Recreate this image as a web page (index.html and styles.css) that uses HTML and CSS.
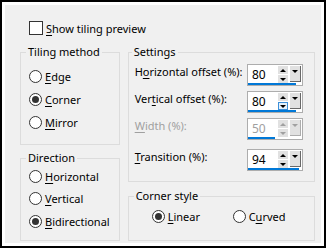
FILE: index.html
```html
<!DOCTYPE html>
<html lang="en">
<head>
  <meta charset="UTF-8">
  <title>Tiling</title>
  <link rel="stylesheet" href="styles.css">
</head>
<body>
  <div class="frame">
    <div class="dialog">
      <label class="check-row"><span class="checkbox"></span><span><u>S</u>how tiling preview</span></label>

      <div class="columns">
        <div class="col col-left">
          <fieldset class="group group-tiling">
            <legend>Tiling method</legend>
            <label class="radio"><span class="circle"></span><span><u>E</u>dge</span></label>
            <label class="radio"><span class="circle checked"></span><span><u>C</u>orner</span></label>
            <label class="radio"><span class="circle"></span><span><u>M</u>irror</span></label>
          </fieldset>

          <fieldset class="group group-direction">
            <legend>Direction</legend>
            <label class="radio"><span class="circle"></span><span><u>H</u>orizontal</span></label>
            <label class="radio"><span class="circle"></span><span><u>V</u>ertical</span></label>
            <label class="radio"><span class="circle checked"></span><span><u>B</u>idirectional</span></label>
          </fieldset>
        </div>

        <div class="col col-right">
          <fieldset class="group group-settings">
            <legend>Settings</legend>
            <div class="field">
              <span class="field-label">H<u>o</u>rizontal offset (%):</span>
              <div class="spin">
                <div class="spin-main">
                  <span class="spin-value">80</span>
                  <span class="spin-arrows"><span class="arrow up"></span><span class="arrow down"></span></span>
                  <span class="spin-drop"></span>
                </div>
                <div class="spin-track"><div class="spin-bar" style="width: 88%"></div></div>
              </div>
            </div>
            <div class="field">
              <span class="field-label">Ver<u>t</u>ical offset (%):</span>
              <div class="spin">
                <div class="spin-main">
                  <span class="spin-value">80</span>
                  <span class="spin-arrows"><span class="arrow up"></span><span class="arrow down hot"></span></span>
                  <span class="spin-drop"></span>
                </div>
                <div class="spin-track"><div class="spin-bar" style="width: 88%"></div></div>
              </div>
            </div>
            <div class="field field-wide disabled">
              <span class="field-label"><u>W</u>idth (%):</span>
              <div class="spin">
                <div class="spin-main">
                  <span class="spin-value">50</span>
                  <span class="spin-arrows"><span class="arrow up"></span><span class="arrow down"></span></span>
                  <span class="spin-drop"></span>
                </div>
                <div class="spin-track"><div class="spin-bar" style="width: 50%"></div></div>
              </div>
            </div>
            <div class="field">
              <span class="field-label"><u>T</u>ransition (%):</span>
              <div class="spin">
                <div class="spin-main">
                  <span class="spin-value">94</span>
                  <span class="spin-arrows"><span class="arrow up"></span><span class="arrow down"></span></span>
                  <span class="spin-drop"></span>
                </div>
                <div class="spin-track"><div class="spin-bar" style="width: 94%"></div></div>
              </div>
            </div>
          </fieldset>

          <fieldset class="group group-corner">
            <legend>Corner style</legend>
            <div class="radio-line">
              <label class="radio radio-linear"><span class="circle checked"></span><span><u>L</u>inear</span></label>
              <label class="radio"><span class="circle"></span><span>C<u>u</u>rved</span></label>
            </div>
          </fieldset>
        </div>
      </div>
    </div>
  </div>
</body>
</html>
```

FILE: styles.css
```css
* {
  box-sizing: border-box;
}

body {
  margin: 0;
  font-family: "Noto Sans", sans-serif;
  font-size: 11px;
  color: #000;
}

u {
  text-underline-offset: 2px;
}

.frame {
  width: 326px;
  height: 248px;
  border: 2px solid #000;
  background: #fff;
  padding: 3px;
}

.dialog {
  height: 100%;
  background: #f0f0f0;
  padding: 16px 6px 0 15px;
}

/* top checkbox */
.check-row {
  display: flex;
  align-items: center;
  gap: 3px;
  height: 14px;
  margin-left: 9px;
}

.checkbox {
  width: 14px;
  height: 14px;
  border: 1px solid #333;
  background: #fff;
}

.columns {
  display: flex;
  gap: 8px;
  margin-top: 10px;
}

.col {
  display: flex;
  flex-direction: column;
}

.col-left {
  width: 100px;
  gap: 6px;
}

.col-right {
  width: 188px;
  gap: 7px;
}

/* group boxes */
.group {
  margin: 0;
  padding: 0 8px;
  border: 1px solid #dcdcdc;
  min-width: 0;
}

legend {
  margin-left: -3px;
  padding: 0 2px;
  line-height: 14px;
}

.group-tiling {
  height: 100px;
  padding-top: 6px;
}

.group-direction {
  height: 90px;
}

.group-settings {
  height: 137px;
  padding: 5px 11px 0 6px;
}

.group-corner {
  height: 52px;
  padding-top: 2px;
}

/* radios */
.radio {
  display: flex;
  align-items: center;
  gap: 3px;
  height: 23px;
  white-space: nowrap;
}

.group-direction .radio {
  height: 22.5px;
}

.circle {
  position: relative;
  width: 13px;
  height: 13px;
  border: 1px solid #333;
  border-radius: 50%;
  background: #fff;
  flex: none;
}

.circle.checked::after {
  content: "";
  position: absolute;
  left: 2px;
  top: 2px;
  width: 7px;
  height: 7px;
  border-radius: 50%;
  background: #333;
}

.radio-line {
  display: flex;
  padding-left: 15px;
}

.radio-linear {
  width: 81px;
}

/* settings rows */
.field {
  display: flex;
  justify-content: space-between;
  align-items: flex-start;
  height: 27px;
}

.field-wide {
  height: 31px;
}

.field-label {
  line-height: 16px;
  white-space: nowrap;
}

.disabled .field-label,
.disabled .spin-value {
  color: #a0a0a0;
}

.spin {
  display: flex;
  flex-direction: column;
  width: 56px;
  height: 22px;
  border: 1px solid #adadad;
  background: #fff;
}

.spin-main {
  display: flex;
  flex: 1;
  align-items: flex-start;
  padding: 1px 1px 0 4px;
}

.spin-value {
  flex: 1;
  font-size: 12px;
  line-height: 17px;
}

.spin-arrows {
  display: flex;
  flex-direction: column;
  gap: 1px;
  width: 10px;
  margin-right: 2px;
}

.arrow {
  display: flex;
  align-items: center;
  justify-content: center;
  height: 8px;
  background: #e1e1e1;
  border: 1px solid #e1e1e1;
}

.arrow::before {
  content: "";
  border-left: 3px solid transparent;
  border-right: 3px solid transparent;
}

.arrow.up::before {
  border-bottom: 3px solid #000;
}

.arrow.down::before {
  border-top: 3px solid #000;
}

.arrow.hot {
  background: #e5f1fb;
  border-color: #3c8fd9;
}

.spin-drop {
  display: flex;
  justify-content: center;
  width: 11px;
  height: 16px;
  background: #e1e1e1;
  border-right: 1px solid #696969;
  border-bottom: 1px solid #696969;
  padding-top: 4px;
}

.spin-drop::before {
  content: "";
  height: 0;
  border-left: 3px solid transparent;
  border-right: 3px solid transparent;
  border-top: 3px solid #000;
}

.disabled .arrow.up::before {
  border-bottom-color: #a0a0a0;
}

.disabled .arrow.down::before,
.disabled .spin-drop::before {
  border-top-color: #a0a0a0;
}

.disabled .spin-drop {
  border-color: #adadad;
}

.spin-track {
  height: 3px;
}

.spin-bar {
  height: 100%;
  background: #0078d7;
}
```
